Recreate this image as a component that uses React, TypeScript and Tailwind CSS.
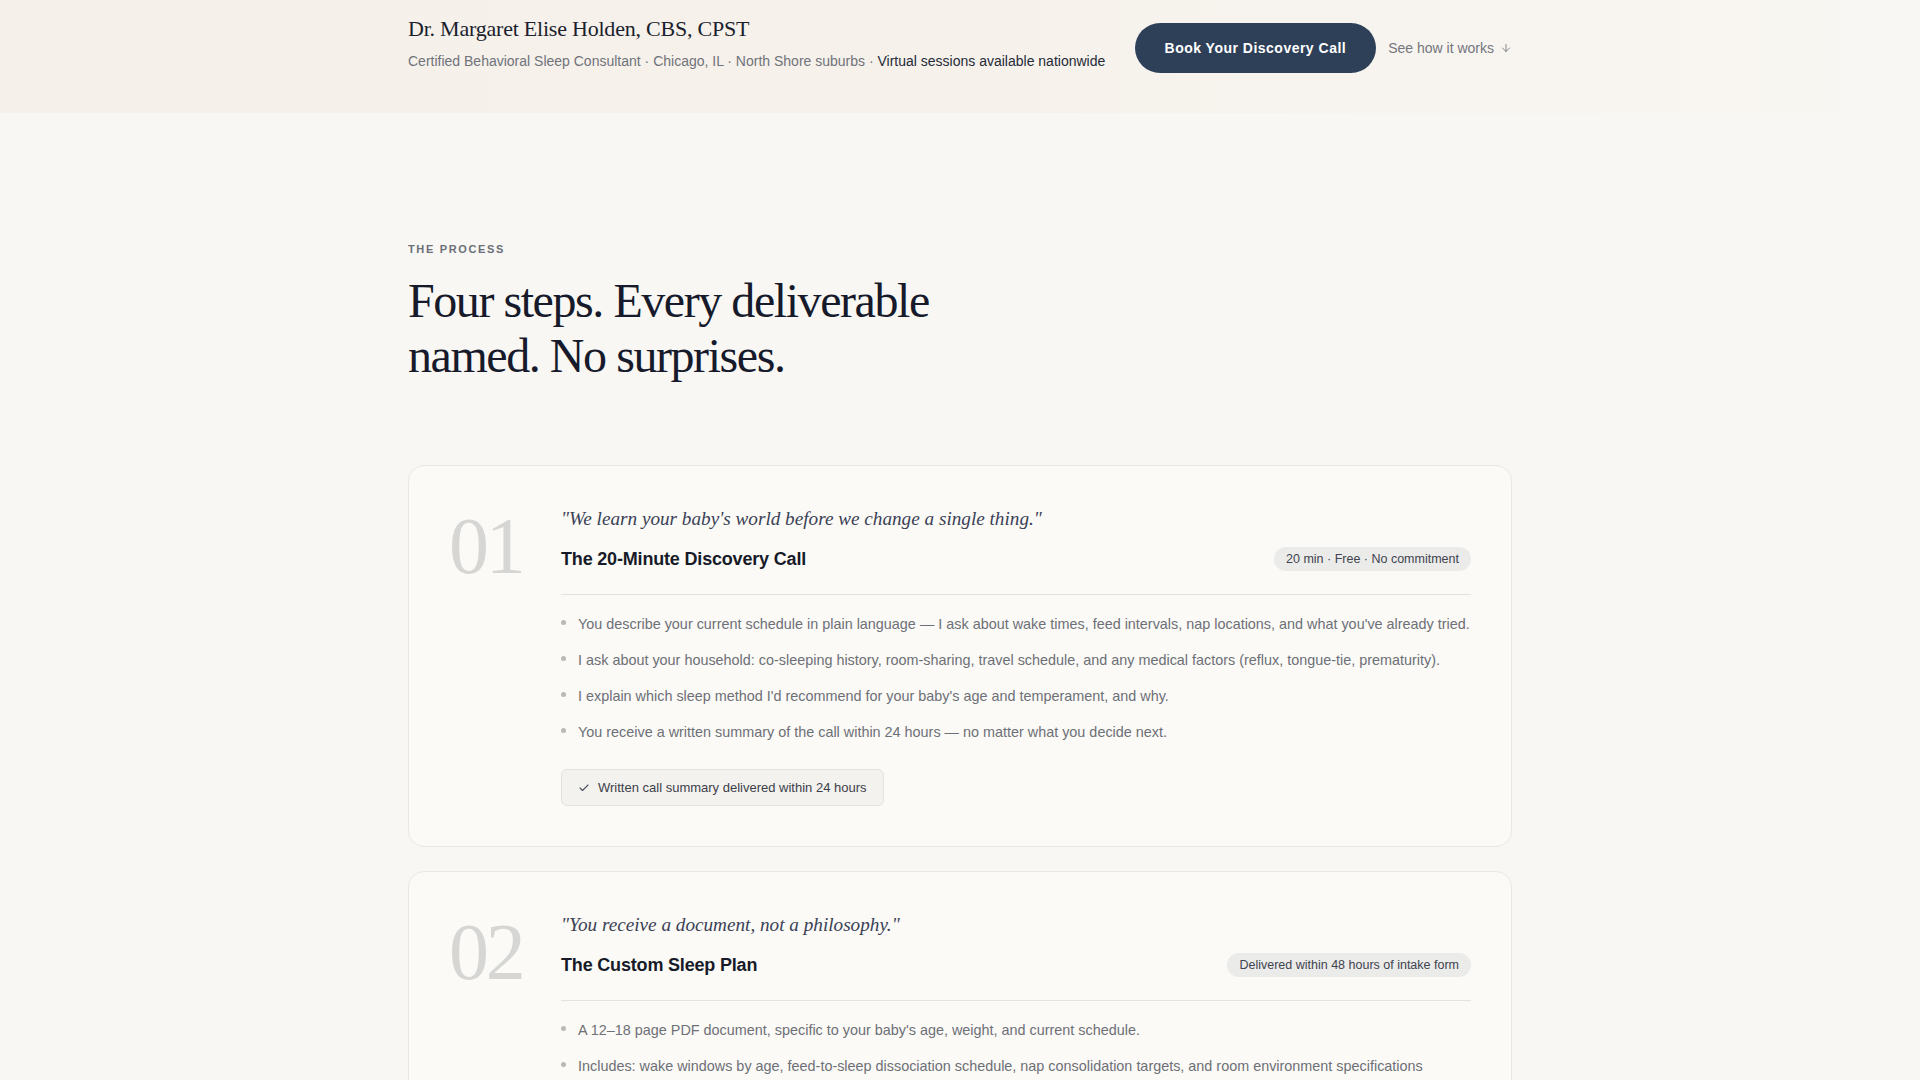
import React from 'react';
import { ArrowDown, Check } from 'lucide-react';

type Step = {
  num: string;
  quote: string;
  title: string;
  meta: string;
  points: string[];
  deliverable: string;
};

const steps: Step[] = [
  {
    num: '01',
    quote: '"We learn your baby\'s world before we change a single thing."',
    title: 'The 20-Minute Discovery Call',
    meta: '20 min · Free · No commitment',
    points: [
      "You describe your current schedule in plain language — I ask about wake times, feed intervals, nap locations, and what you've already tried.",
      'I ask about your household: co-sleeping history, room-sharing, travel schedule, and any medical factors (reflux, tongue-tie, prematurity).',
      "I explain which sleep method I'd recommend for your baby's age and temperament, and why.",
      'You receive a written summary of the call within 24 hours — no matter what you decide next.',
    ],
    deliverable: 'Written call summary delivered within 24 hours',
  },
  {
    num: '02',
    quote: '"You receive a document, not a philosophy."',
    title: 'The Custom Sleep Plan',
    meta: 'Delivered within 48 hours of intake form',
    points: [
      "A 12–18 page PDF document, specific to your baby's age, weight, and current schedule.",
      'Includes: wake windows by age, feed-to-sleep dissociation schedule, nap consolidation targets, and room environment specifications tailored to your nursery.',
      'A night-by-night script for the first two weeks, with exact responses for every wake-up scenario.',
    ],
    deliverable: '12–18 page personalized PDF sleep plan',
  },
  {
    num: '03',
    quote: '"You are never guessing at 2 a.m."',
    title: 'Two Weeks of Daily Support',
    meta: '14 days · Daily check-ins',
    points: [
      'You log sleep in a shared tracker each morning; I review it and reply with adjustments the same day.',
      'Unlimited text and email questions between 7 a.m. and 9 p.m. Central.',
      'Two 30-minute video calls to troubleshoot regressions, illness, or schedule changes.',
    ],
    deliverable: 'Daily written feedback on your sleep log',
  },
  {
    num: '04',
    quote: '"We finish with a plan you can run on your own."',
    title: 'The Transition & Maintenance Guide',
    meta: 'Final call · 45 min',
    points: [
      'A closing call to review progress against the targets set in your plan.',
      'A maintenance guide covering teething, travel, daylight saving, and the next nap transition.',
      'Thirty days of email follow-up after the program ends.',
    ],
    deliverable: 'Maintenance guide for the next 6 months',
  },
];

function StepCard({ step }: { step: Step }) {
  return (
    <div className="rounded-2xl border border-[#ece8e1] bg-[#fbfaf7] p-10 grid grid-cols-[80px_1fr] gap-8">
      <div className="font-['Liberation_Serif',serif] text-[80px] leading-none tracking-[-0.04em] text-[#d6d6d4]">
        {step.num}
      </div>

      <div>
        <p className="font-['Liberation_Serif',serif] italic text-[19.2px] leading-[26px] text-[#3a4155]">
          {step.quote}
        </p>

        <div className="mt-[14px] pb-[22px] border-b border-[#e4e3df] flex items-center justify-between">
          <h3 className="text-[18px] leading-[26px] font-semibold tracking-[-0.01em] text-[#171a28]">{step.title}</h3>
          <span className="rounded-full bg-[#ebebe9] px-3 py-1 text-[12.5px] leading-4 text-[#3f4450]">
            {step.meta}
          </span>
        </div>

        <ul className="pt-[18px] space-y-[14px]">
          {step.points.map((text, idx) => (
            <li key={idx} className="flex items-start gap-3 text-[14.4px] leading-[22px] text-[#6d7076]">
              <span className="mt-[7px] w-[5px] h-[5px] shrink-0 rounded-full bg-[#b9b9b7]" />
              <span>{text}</span>
            </li>
          ))}
        </ul>

        <div className="mt-[26px] inline-flex items-center gap-2 rounded-md border border-[#e3e2de] bg-[#f3f2ef] px-4 py-2 text-[13px] leading-[19px] text-[#3c404a]">
          <Check className="w-3 h-3 text-[#4b5060]" strokeWidth={2.25} />
          <span>{step.deliverable}</span>
        </div>
      </div>
    </div>
  );
}

export default function App() {
  return (
    <div className="min-h-screen bg-[#f9f7f3] font-['Liberation_Sans',Arial,sans-serif]">
      {/* Top bar */}
      <header className="h-[113px] bg-gradient-to-r from-[#f5f0e9] via-[#f6f1eb] to-[#f9f7f3]">
        <div className="max-w-6xl mx-auto px-6 pt-[15px] flex items-start justify-between">
          <div>
            <div className="font-['Liberation_Serif',serif] text-[22px] leading-[28px] tracking-[-0.01em] text-[#1b1f2e]">
              Dr. Margaret Elise Holden, CBS, CPST
            </div>
            <p className="mt-[8px] text-sm leading-5 text-[#70737a]">
              Certified Behavioral Sleep Consultant · Chicago, IL · North Shore suburbs ·{' '}
              <span className="text-[#252a38]">Virtual sessions available nationwide</span>
            </p>
          </div>

          <div className="mt-2 flex items-center gap-3">
            <button className="rounded-full bg-[#2e4058] px-[30px] py-[15px] text-sm leading-5 font-semibold text-white tracking-[0.035em]">
              Book Your Discovery Call
            </button>
            <a href="#process" className="flex items-center gap-1.5 text-sm text-[#73767d]">
              See how it works
              <ArrowDown className="w-3 h-3" strokeWidth={1.75} />
            </a>
          </div>
        </div>
      </header>

      {/* Process */}
      <section id="process" className="max-w-6xl mx-auto px-6 pt-32 pb-24">
        <div className="text-[11px] leading-4 font-bold tracking-[0.15em] text-[#6b6f78]">THE PROCESS</div>
        <h2 className="mt-4 max-w-xl font-['Liberation_Serif',serif] text-5xl leading-[1.15] tracking-[-0.03em] text-[#161a2b]">
          Four steps. Every deliverable named. No surprises.
        </h2>

        <div className="mt-[82px] flex flex-col gap-6">
          {steps.map((step) => (
            <StepCard key={step.num} step={step} />
          ))}
        </div>
      </section>
    </div>
  );
}
